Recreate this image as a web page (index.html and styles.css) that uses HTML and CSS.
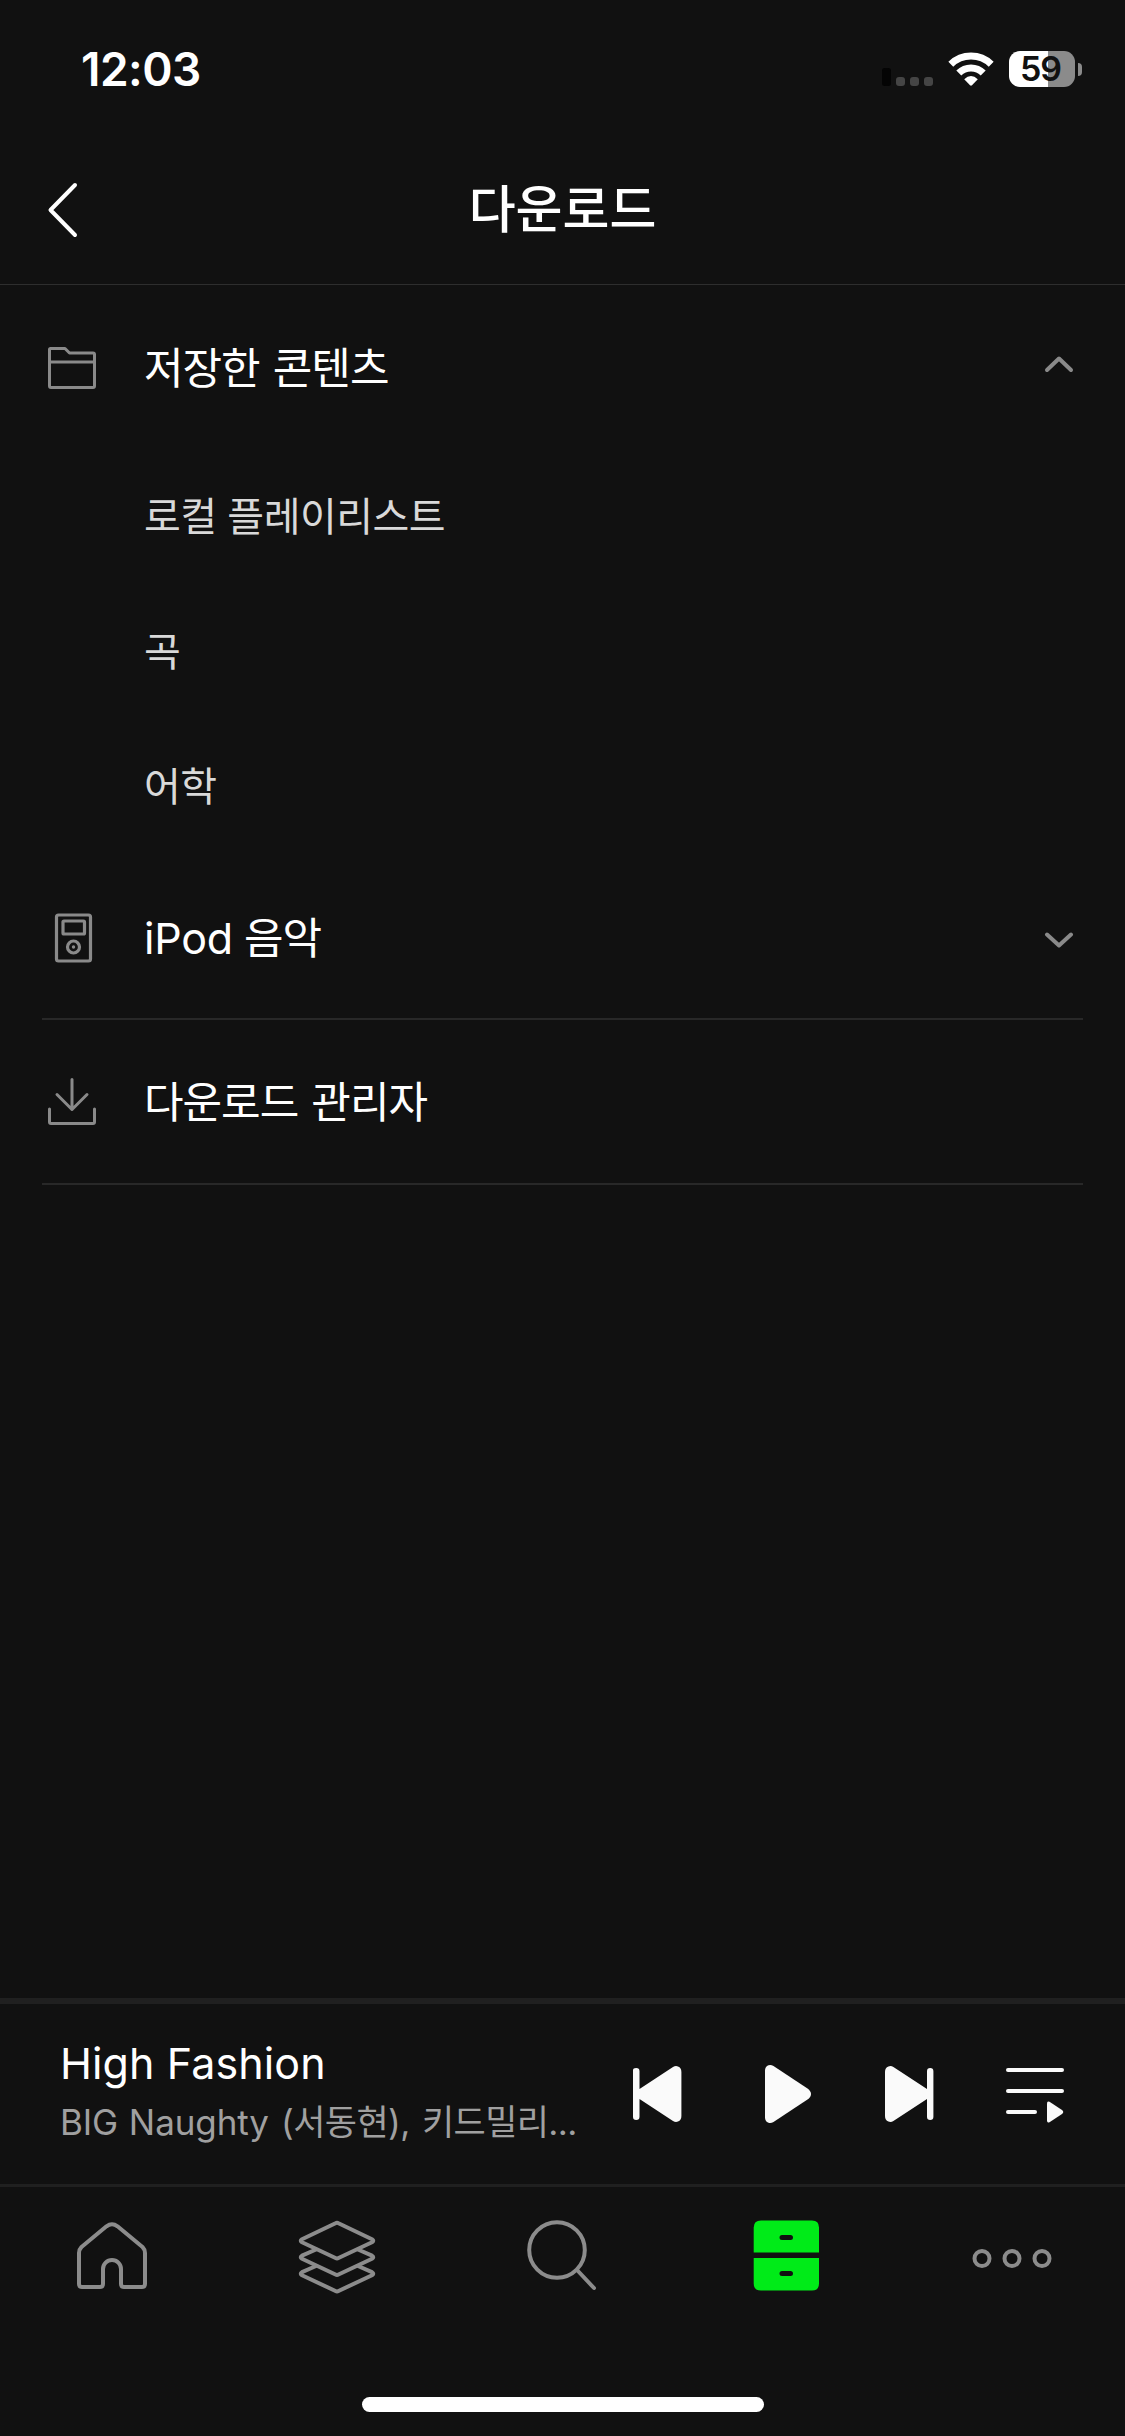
FILE: index.html
```html
<!DOCTYPE html>
<html lang="ko">
<head>
<meta charset="utf-8">
<title>다운로드</title>
<link rel="stylesheet" href="styles.css">
</head>
<body>
<div class="screen">
  <div class="status">
    <span class="clock">12:03</span>
    <div class="indicators">
      <svg class="signal" width="52" height="18" viewBox="0 0 52 18"><rect x="0" y="0" width="9" height="18" rx="2.5" fill="#040404"/><g fill="#454545"><rect x="14" y="9" width="9" height="9" rx="3"/><rect x="28" y="9" width="9" height="9" rx="3"/><rect x="42" y="9" width="9" height="9" rx="3"/></g></svg>
      <svg class="wifi" width="46" height="34" viewBox="0 0 46 34"><g fill="none" stroke="#fff" stroke-width="7"><path d="M2.8 12.2A29 29 0 0 1 43.2 12.2"/><path d="M10.8 21A17.2 17.2 0 0 1 35.2 21"/></g><path d="M16.2 27.2Q23 20.8 29.8 27.2L24 33.2Q23 34.1 22 33.2Z" fill="#fff"/></svg>
      <div class="battery"><span class="level">59</span></div>
      <div class="nub"></div>
    </div>
  </div>

  <header class="header">
    <svg class="back" width="32" height="56" viewBox="0 0 32 56"><path d="M28 3L3.5 28L28 53" fill="none" stroke="#fff" stroke-width="4" stroke-linecap="round" stroke-linejoin="round"/></svg>
    <h1 class="title">다운로드</h1>
  </header>

  <main class="content">
    <div class="row">
      <svg class="icon" width="50" height="50" viewBox="0 0 50 50"><g fill="none" stroke="#8a8a8a" stroke-width="3" stroke-linejoin="round"><path d="M3.5 5.5H18L22.5 10H46Q47.5 10 47.5 11.5V43Q47.5 44.5 46 44.5H4Q2.5 44.5 2.5 43V6.5Q2.5 5.5 3.5 5.5Z"/><path d="M2.5 19H47.5"/></g></svg>
      <span class="label">저장한 콘텐츠</span>
      <svg class="chevron" width="30" height="26" viewBox="0 0 30 26"><path d="M3 15L15 3.500L27 15"/></svg>
    </div>
    <div class="subrow"><span class="sublabel">로컬 플레이리스트</span></div>
    <div class="subrow"><span class="sublabel">곡</span></div>
    <div class="subrow"><span class="sublabel">어학</span></div>
    <div class="row ruled ipod">
      <svg class="icon" width="50" height="50" viewBox="0 0 50 50"><g fill="none" stroke="#8a8a8a" stroke-width="3.200"><rect x="9.500" y="2" width="34" height="46" rx="2"/><rect x="16" y="8" width="21.500" height="13" rx="1"/><circle cx="26.500" cy="34" r="6"/></g><circle cx="26.500" cy="34" r="1.700" fill="#8a8a8a"/></svg>
      <span class="label"><span class="latin">iPod</span> 음악</span>
      <svg class="chevron" width="30" height="20" viewBox="0 0 30 20"><path d="M3 6.500L15 17.500L27 6.500"/></svg>
    </div>
    <div class="row ruled">
      <svg class="icon" width="50" height="50" viewBox="0 0 50 50"><g fill="none" stroke="#8a8a8a" stroke-width="3" stroke-linecap="round" stroke-linejoin="round"><path d="M25 2.500V32.500M10 17.500L25 32.500L40 17.500"/><path d="M2.500 32V45Q2.500 46.500 4 46.500H46Q47.500 46.500 47.500 45V32"/></g></svg>
      <span class="label">다운로드 관리자</span>
    </div>
  </main>

  <section class="player">
    <div class="track">
      <div class="song">High Fashion</div>
      <div class="artist"><span class="latin">BIG Naughty</span> (서동현), 키드밀리...</div>
    </div>
    <div class="controls">
      <svg width="60" height="60" viewBox="0 0 60 60"><path d="M6 6.200Q6 4 9.200 4Q12.500 4 12.500 7.200V25L46 3.100Q48.500 1.500 51 2.500Q54.400 3.700 54.400 8V52Q54.400 56.300 51 57.500Q48.500 58.500 46 56.900L12.500 35V52.800Q12.500 56 9.200 56Q6 56 6 52.800Z"/></svg>
      <svg width="60" height="60" viewBox="0 0 60 60"><path d="M12 6.500Q12 2.500 15.500 1.300Q18 .5 20.500 2.100L54.500 24.500Q58 27 58 30Q58 33 54.500 35.500L20.500 57.900Q18 59.500 15.500 58.700Q12 57.500 12 53.500Z"/></svg>
      <svg width="60" height="60" viewBox="0 0 60 60"><path d="M54.400 7.200Q54.400 4 51.200 4Q48 4 48 7.200V25L14.400 3.100Q12 1.500 9.400 2.500Q6 3.700 6 8V52Q6 56.300 9.400 57.500Q12 58.500 14.400 56.900L48 35V52.800Q48 56 51.200 56Q54.400 56 54.400 52.800Z"/></svg>
      <svg width="60" height="60" viewBox="0 0 60 60"><rect x="1" y="4" width="58" height="4" rx="2"/><rect x="1" y="25" width="58" height="4" rx="2"/><rect x="1" y="46" width="31" height="4" rx="2"/><path d="M42 39.500Q42 36.500 44.500 37.800L57 46Q59.500 48 57 50L44.500 58.200Q42 59.500 42 56.500Z"/></svg>
    </div>
  </section>

  <nav class="tabs">
    <a class="tab"><svg width="81" height="80" viewBox="0 0 81 80"><path d="M7 37Q7 33.500 9.500 31L34.500 10.300Q40 6.300 45.500 10.300L70.500 31Q73 33.500 73 37V68Q73 71 70 71H52Q49 71 49 68V53A9 9 0 0 0 31 53V68Q31 71 28 71H10Q7 71 7 68Z"/></svg></a>
    <a class="tab"><svg width="81" height="80" viewBox="0 0 81 80"><path d="M38.500 7.200Q40 6.400 41.500 7.200L75 23.300Q77.500 24.800 75 26.300L41.500 42Q40 42.800 38.500 42L5 26.300Q2.500 24.800 5 23.300Z"/><path d="M19 33.500L5 39.700Q2.500 41.200 5 42.700L38.500 58.500Q40 59.300 41.500 58.500L75 42.700Q77.500 41.200 75 39.700L61 33.500"/><path d="M19 50L5 56.200Q2.500 57.700 5 59.200L38.500 75Q40 75.800 41.500 75L75 59.200Q77.500 57.700 75 56.200L61 50"/></svg></a>
    <a class="tab"><svg width="81" height="80" viewBox="0 0 81 80"><circle cx="35" cy="34" r="27.800"/><path d="M55.500 54.500L72 72"/></svg></a>
    <a class="tab active"><svg width="81" height="80" viewBox="0 0 81 80"><path fill-rule="evenodd" d="M14 4.500H65Q72 4.500 72 11.500V36.500H6.700V11.500Q6.700 4.500 14 4.500ZM35 19A2.500 2.500 0 0 0 35 24H43.500A2.500 2.500 0 0 0 43.500 19Z"/><path fill-rule="evenodd" d="M6.700 42H72V67.500Q72 74.500 65 74.500H14Q6.700 74.500 6.700 67.500ZM35 55A2.500 2.500 0 0 0 35 60H43.500A2.500 2.500 0 0 0 43.500 55Z"/></svg></a>
    <a class="tab"><svg width="81" height="80" viewBox="0 0 81 80"><circle cx="10" cy="42.500" r="7.500"/><circle cx="40" cy="42.500" r="7.500"/><circle cx="70" cy="42.500" r="7.500"/></svg></a>
  </nav>
  <div class="home-indicator"></div>
</div>
</body>
</html>
```
FILE: styles.css
```css
* { box-sizing: border-box; }
body { margin: 0; background: #111; }
svg { display: block; flex: none; }

.screen {
  width: 1125px;
  height: 2436px;
  display: flex;
  flex-direction: column;
  background: #111;
  color: #fff;
  font-family: Inter, "Noto Sans CJK KR", sans-serif;
  white-space: nowrap;
}

.status {
  height: 135px;
  padding: 3px 43px 0 81px;
  display: flex;
  align-items: center;
  justify-content: space-between;
}
.clock { font-size: 46px; font-weight: 600; line-height: 60px; letter-spacing: -.5px; }
.indicators { display: flex; align-items: center; }
.signal { margin: 16px 14px 0 0; }
.wifi { margin-right: 15px; }
.battery {
  width: 66px;
  height: 36px;
  padding-right: 3px;
  border-radius: 11px;
  background: linear-gradient(90deg, #fff 39px, #8b8b8b 39px);
  display: flex;
  align-items: center;
  justify-content: center;
}
.level { color: #111; font-size: 34px; font-weight: 600; line-height: 36px; letter-spacing: -1px; }
.nub { width: 4px; height: 13px; margin-left: 3px; border-radius: 0 4px 4px 0; background: #8b8b8b; }

.header {
  height: 150px;
  padding: 0 47px;
  display: grid;
  grid-template-columns: 32px 1fr 32px;
  align-items: center;
  border-bottom: 1px solid #2e2e2e;
}
.title { margin: 0; padding-top: 1px; text-align: center; font-size: 51px; font-weight: 500; line-height: 74px; }

.content { flex: 1; }
.row {
  height: 165px;
  margin: 0 42px;
  padding: 0 9px 0 5px;
  display: flex;
  align-items: center;
}
.ruled { border-bottom: 2px solid #282828; }
.ipod { padding-top: 3px; }
.icon { margin-right: 47px; }
.label { flex: 1; font-size: 43px; line-height: 62px; letter-spacing: -1px; word-spacing: 2px; }
.ipod .label { word-spacing: 0; }
.label .latin { font-size: 43px; letter-spacing: -.2px; }
.chevron { fill: none; stroke: #8a8a8a; stroke-width: 4; stroke-linecap: round; stroke-linejoin: round; }
.subrow { height: 135px; padding: 0 0 1px 144px; display: flex; align-items: center; }
.sublabel { font-size: 40px; line-height: 58px; letter-spacing: -.5px; color: #d9d9d9; }

.player {
  height: 189px;
  padding: 0 60px;
  display: flex;
  align-items: center;
  justify-content: space-between;
  border-top: 6px solid #202020;
  border-bottom: 3px solid #202020;
}
.track { width: 520px; padding-bottom: 4px; }
.song { font-size: 43px; line-height: 59px; letter-spacing: .1px; }
.artist { font-size: 35px; line-height: 58px; letter-spacing: -.6px; word-spacing: 3px; color: #a0a0a0; }
.artist .latin { letter-spacing: -.1px; word-spacing: 1px; }
.controls { width: 438px; display: flex; justify-content: space-between; fill: #fafafa; }

.tabs { height: 210px; padding-top: 29px; display: grid; grid-template-columns: repeat(5, 225px); }
.tab { display: flex; justify-content: center; align-items: flex-start; fill: none; stroke: #8c8c8c; stroke-width: 4; stroke-linecap: round; stroke-linejoin: round; }
.active { fill: #00eb18; stroke: none; }

.home-indicator { width: 402px; height: 15px; margin: 0 auto 24px 362px; border-radius: 8px; background: #fff; }
```
